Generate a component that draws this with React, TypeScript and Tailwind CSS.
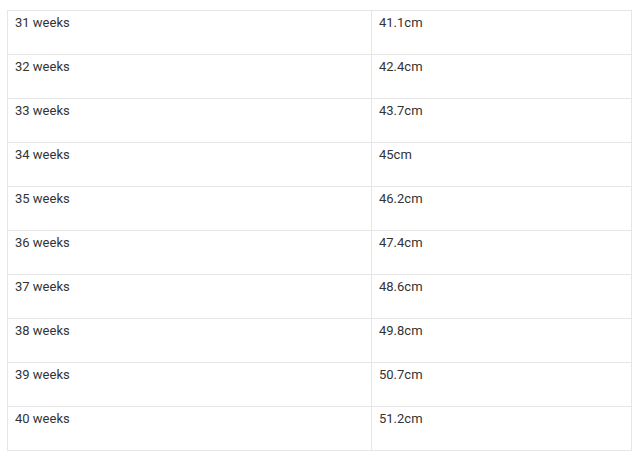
const rows = [
  ["31 weeks", "41.1cm"],
  ["32 weeks", "42.4cm"],
  ["33 weeks", "43.7cm"],
  ["34 weeks", "45cm"],
  ["35 weeks", "46.2cm"],
  ["36 weeks", "47.4cm"],
  ["37 weeks", "48.6cm"],
  ["38 weeks", "49.8cm"],
  ["39 weeks", "50.7cm"],
  ["40 weeks", "51.2cm"],
];

export default function App() {
  return (
    <div className="bg-white min-h-[461px] pl-[7px] pt-[10px] font-['Roboto',sans-serif] text-[13px] leading-[20px] text-[#333]">
      <table className="w-[625px] border-collapse table-fixed">
        <colgroup>
          <col className="w-[364px]" />
          <col />
        </colgroup>
        <tbody>
          {rows.map(([week, size]) => (
            <tr key={week} className="h-[44px]">
              <td className="border border-[#e6e6e6] align-top px-[7px] pt-[2px]">{week}</td>
              <td className="border border-[#e6e6e6] align-top px-[7px] pt-[2px]">{size}</td>
            </tr>
          ))}
        </tbody>
      </table>
    </div>
  );
}
